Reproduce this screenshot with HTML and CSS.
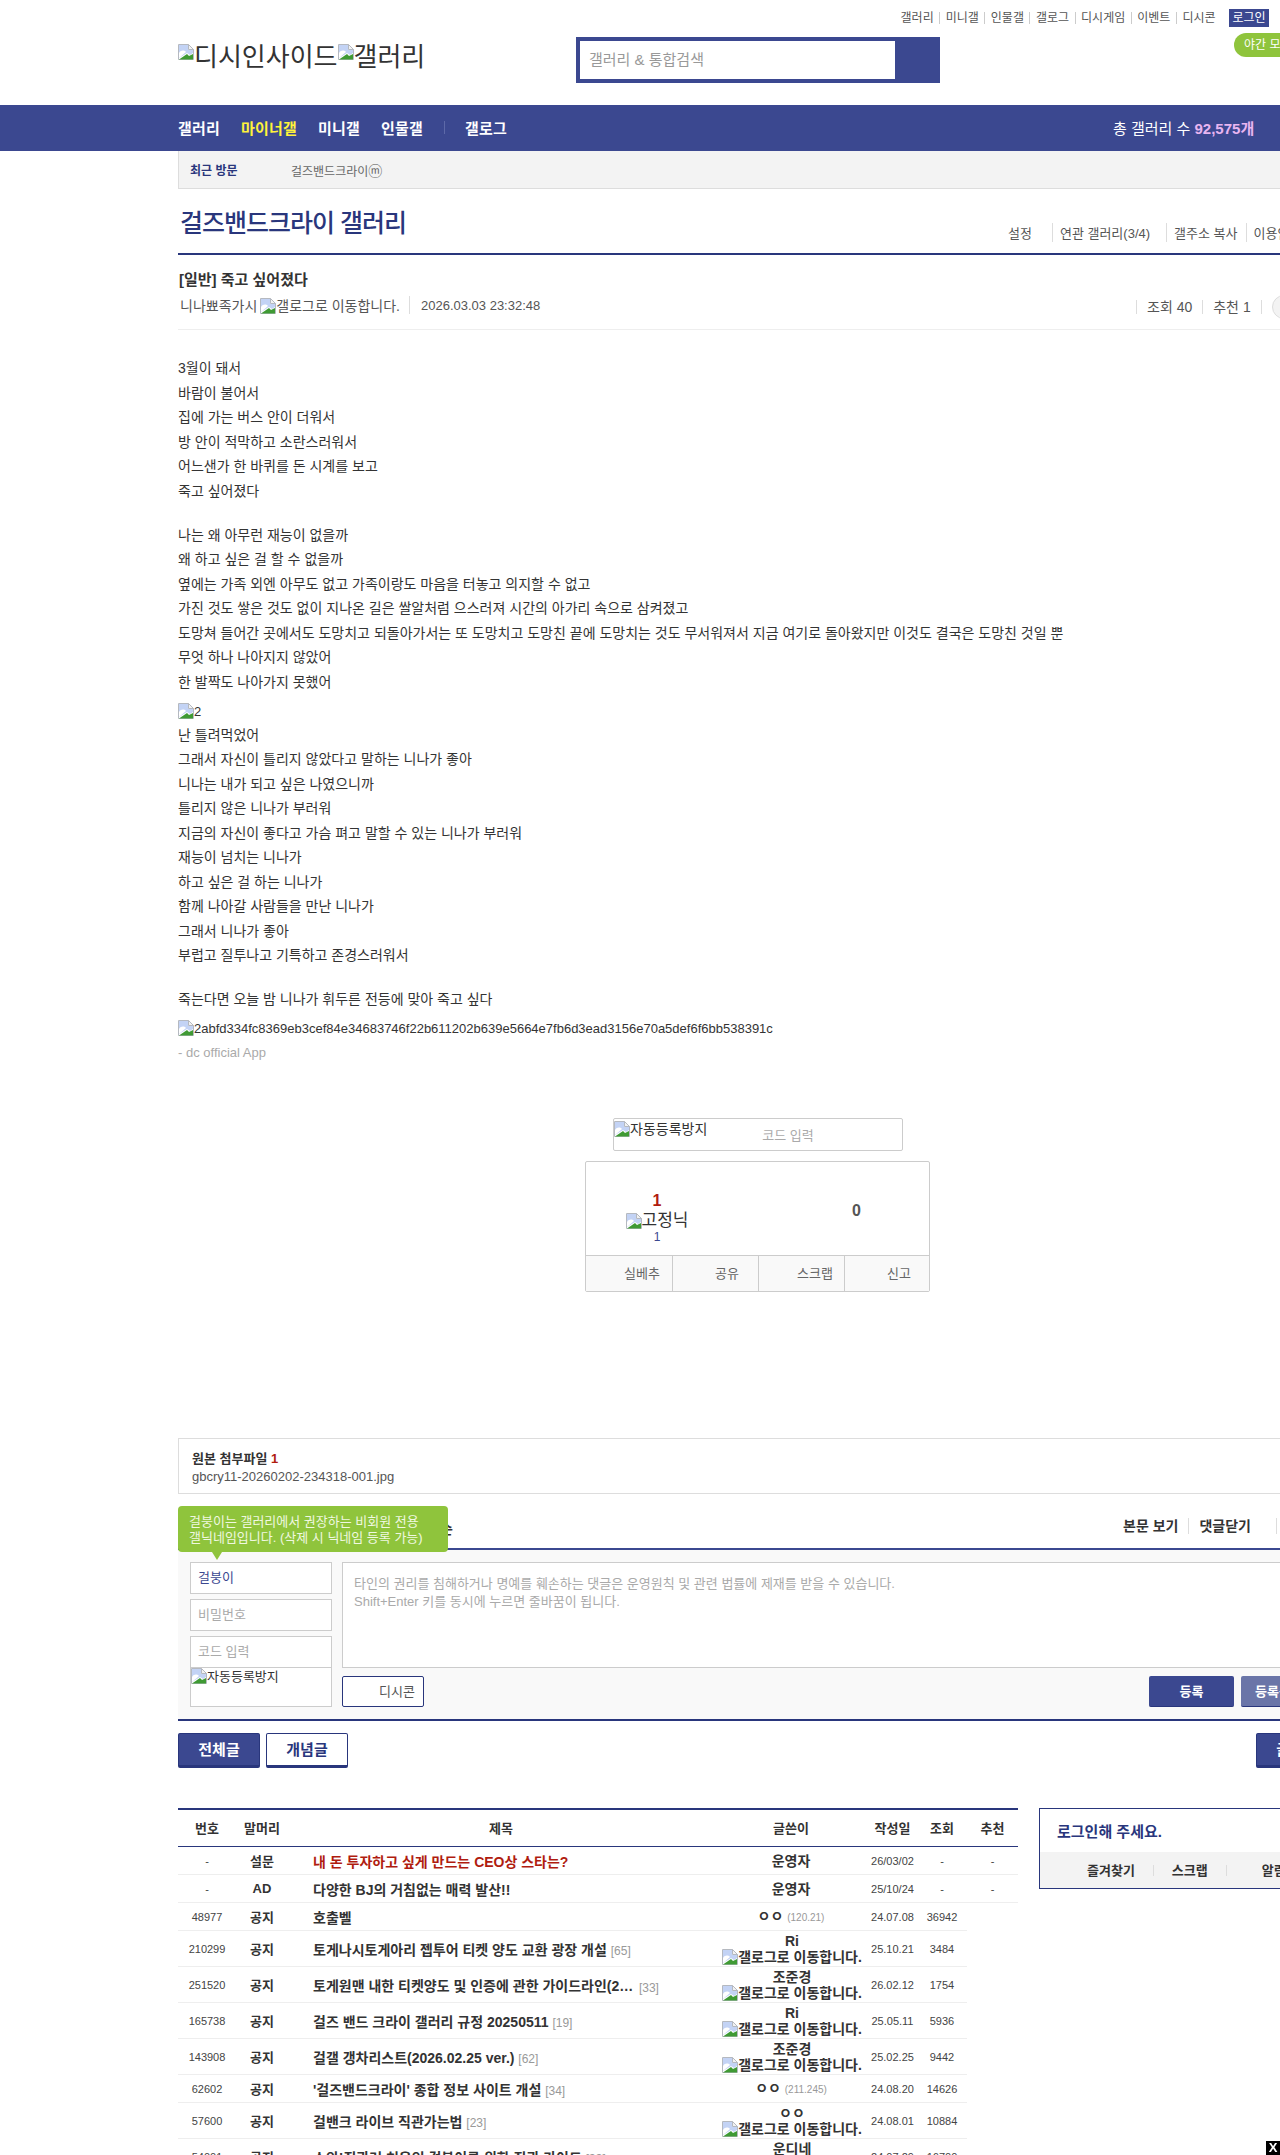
FILE: index.html
```html
<!DOCTYPE html>
<html lang="ko">
<head>
  <meta charset="UTF-8" />
  <title>걸즈밴드크라이 갤러리</title>
  <link rel="stylesheet" href="styles.css">
</head>
<body>
  <svg class="sprite" width="0" height="0">
    <symbol id="broken" viewBox="0 0 16 16">
      <path d="M.5.5h10l5 5v10H.5z" fill="#fff" stroke="#b5b9c0"/>
      <path d="M1 1h9.300v5H15v3l-3 2-3-2-8 5z" fill="#c3d3f5"/>
      <path d="M1 9c2-3 5-3 7-1l-7 6z" fill="#fff"/>
      <path d="M1 15.500 9 10l2 2 4-2v5.500z" fill="#3f9a34"/>
      <path d="M10.500 .5v5h5z" fill="#f2f2f2" stroke="#b5b9c0"/>
    </symbol>
  </svg>

  <div class="wrap">
    <div class="top-links">
      <a>갤러리</a><a>미니갤</a><a>인물갤</a><a>갤로그</a><a>디시게임</a><a>이벤트</a><a>디시콘</a>
      <span class="login-btn">로그인</span>
    </div>
    <div class="head">
      <div class="logo"><svg class="bi"><use href="#broken"/></svg>디시인사이드<svg class="bi"><use href="#broken"/></svg>갤러리</div>
      <div class="search">
        <div class="search-input">갤러리 &amp; 통합검색</div>
      </div>
      <div class="dark-mode">야간 모드</div>
    </div>
  </div>

  <div class="nav">
    <div class="wrap nav-in">
      <a>갤러리</a><a class="on">마이너갤</a><a>미니갤</a><a>인물갤</a><i></i><a>갤로그</a>
      <span class="nav-count">총 갤러리 수 <b>92,575개</b></span>
    </div>
  </div>

  <div class="wrap">
    <div class="recent">
      <b>최근 방문</b>
      <span>걸즈밴드크라이<em>ⓜ</em></span>
    </div>

    <div class="gall-head">
      <h2>걸즈밴드크라이 갤러리</h2>
      <div class="gall-links">
        <a>설정</a><a>연관 갤러리(3/4)</a><a>갤주소 복사</a><a>이용안내</a>
      </div>
    </div>

    <div class="post-head">
      <h3>[일반] 죽고 싶어졌다</h3>
      <div class="post-meta">
        <span class="writer">니나뾰족가시<svg class="bi small"><use href="#broken"/></svg>갤로그로 이동합니다.</span>
        <span class="date">2026.03.03 23:32:48</span>
        <span class="stats"><span>조회 40</span><span>추천 1</span><span class="cmt-circle"></span></span>
      </div>
    </div>

    <div class="post-body">
      <div class="para">
        <p>3월이 돼서</p>
        <p>바람이 불어서</p>
        <p>집에 가는 버스 안이 더워서</p>
        <p>방 안이 적막하고 소란스러워서</p>
        <p>어느샌가 한 바퀴를 돈 시계를 보고</p>
        <p>죽고 싶어졌다</p>
      </div>
      <div class="para">
        <p>나는 왜 아무런 재능이 없을까</p>
        <p>왜 하고 싶은 걸 할 수 없을까</p>
        <p>옆에는 가족 외엔 아무도 없고 가족이랑도 마음을 터놓고 의지할 수 없고</p>
        <p>가진 것도 쌓은 것도 없이 지나온 길은 쌀알처럼 으스러져 시간의 아가리 속으로 삼켜졌고</p>
        <p>도망쳐 들어간 곳에서도 도망치고 되돌아가서는 또 도망치고 도망친 끝에 도망치는 것도 무서워져서 지금 여기로 돌아왔지만 이것도 결국은 도망친 것일 뿐</p>
        <p>무엇 하나 나아지지 않았어</p>
        <p>한 발짝도 나아가지 못했어</p>
      </div>
      <p class="img-line"><svg class="bi small"><use href="#broken"/></svg>2</p>
      <div class="para">
        <p>난 틀려먹었어</p>
        <p>그래서 자신이 틀리지 않았다고 말하는 니나가 좋아</p>
        <p>니나는 내가 되고 싶은 나였으니까</p>
        <p>틀리지 않은 니나가 부러워</p>
        <p>지금의 자신이 좋다고 가슴 펴고 말할 수 있는 니나가 부러워</p>
        <p>재능이 넘치는 니나가</p>
        <p>하고 싶은 걸 하는 니나가</p>
        <p>함께 나아갈 사람들을 만난 니나가</p>
        <p>그래서 니나가 좋아</p>
        <p>부럽고 질투나고 기특하고 존경스러워서</p>
      </div>
      <div class="para end">
        <p>죽는다면 오늘 밤 니나가 휘두른 전등에 맞아 죽고 싶다</p>
      </div>
      <p class="hash"><svg class="bi small"><use href="#broken"/></svg>2abfd334fc8369eb3cef84e34683746f22b611202b639e5664e7fb6d3ead3156e70a5def6f6bb538391c</p>
      <p class="app-sign">- dc official App</p>
    </div>

    <div class="rec-code">
      <span class="rec-img"><svg class="bi small"><use href="#broken"/></svg>자동등록방지</span>
      <span class="rec-ph">코드 입력</span>
    </div>
    <div class="rec-box">
      <div class="rec-top">
        <div class="rec-up">
          <strong>1</strong>
          <span class="gonick"><svg class="bi small"><use href="#broken"/></svg>고정닉</span>
          <small>1</small>
        </div>
        <div class="rec-down">0</div>
      </div>
      <div class="rec-btns">
        <span>실베추</span><span>공유</span><span>스크랩</span><span>신고</span>
      </div>
    </div>

    <div class="attach">
      <b>원본 첨부파일 <em>1</em></b>
      <p>gbcry11-20260202-234318-001.jpg</p>
    </div>

    <div class="cmt-head">
      <span class="cmt-sort">전체 리플 0개 등록순</span>
      <div class="cmt-links"><a>본문 보기</a><a>댓글닫기</a><a>새로고침</a></div>
      <div class="tip">걸붕이는 갤러리에서 권장하는 비회원 전용<br>갤닉네임입니다. (삭제 시 닉네임 등록 가능)</div>
    </div>

    <div class="cmt-form">
      <div class="cmt-user">
        <div class="field navy">걸붕이</div>
        <div class="field">비밀번호</div>
        <div class="field last">코드 입력</div>
        <div class="code-img"><svg class="bi small"><use href="#broken"/></svg>자동등록방지</div>
      </div>
      <div class="cmt-main">
        <div class="textarea">타인의 권리를 침해하거나 명예를 훼손하는 댓글은 운영원칙 및 관련 법률에 제재를 받을 수 있습니다.<br>Shift+Enter 키를 동시에 누르면 줄바꿈이 됩니다.</div>
        <div class="cmt-btns">
          <span class="dccon">디시콘</span>
          <span class="btn-reg">등록</span>
          <span class="btn-reg alt">등록+추천</span>
        </div>
      </div>
    </div>

    <div class="tabs">
      <a class="tab on">전체글</a><a class="tab">개념글</a>
      <a class="tab on write">글쓰기</a>
    </div>

    <div class="list-area">
      <table class="list">
        <colgroup>
          <col class="c-no"><col class="c-head"><col class="c-title"><col class="c-user"><col class="c-date"><col class="c-view"><col class="c-rec">
        </colgroup>
        <thead>
          <tr><th>번호</th><th>말머리</th><th>제목</th><th>글쓴이</th><th>작성일</th><th>조회</th><th>추천</th></tr>
        </thead>
        <tbody>
          <tr class="r28"><td>-</td><td class="hd">설문</td><td class="tt red">내 돈 투자하고 싶게 만드는 CEO상 스타는?</td><td class="us">운영자</td><td>26/03/02</td><td>-</td><td>-</td></tr>
          <tr class="r28"><td>-</td><td class="hd">AD</td><td class="tt">다양한 BJ의 거침없는 매력 발산!!</td><td class="us">운영자</td><td>25/10/24</td><td>-</td><td>-</td></tr>
          <tr class="r28"><td>48977</td><td class="hd">공지</td><td class="tt">호출벨</td><td class="us">ㅇㅇ <span class="ip">(120.21)</span></td><td>24.07.08</td><td>36942</td></tr>
          <tr><td>210299</td><td class="hd">공지</td><td class="tt">토게나시토게아리 젭투어 티켓 양도 교환 광장 개설 <span class="rp">[65]</span></td><td class="us two">Ri<br><span class="gl"><svg class="bi small"><use href="#broken"/></svg>갤로그로 이동합니다.</span></td><td>25.10.21</td><td>3484</td></tr>
          <tr><td>251520</td><td class="hd">공지</td><td class="tt"><span class="cut">토게원맨 내한 티켓양도 및 인증에 관한 가이드라인(2026)</span> <span class="rp">[33]</span></td><td class="us two">조준경<br><span class="gl"><svg class="bi small"><use href="#broken"/></svg>갤로그로 이동합니다.</span></td><td>26.02.12</td><td>1754</td></tr>
          <tr><td>165738</td><td class="hd">공지</td><td class="tt">걸즈 밴드 크라이 갤러리 규정 20250511 <span class="rp">[19]</span></td><td class="us two">Ri<br><span class="gl"><svg class="bi small"><use href="#broken"/></svg>갤로그로 이동합니다.</span></td><td>25.05.11</td><td>5936</td></tr>
          <tr><td>143908</td><td class="hd">공지</td><td class="tt">걸갤 갱차리스트(2026.02.25 ver.) <span class="rp">[62]</span></td><td class="us two">조준경<br><span class="gl"><svg class="bi small"><use href="#broken"/></svg>갤로그로 이동합니다.</span></td><td>25.02.25</td><td>9442</td></tr>
          <tr class="r28"><td>62602</td><td class="hd">공지</td><td class="tt">'걸즈밴드크라이' 종합 정보 사이트 개설 <span class="rp">[34]</span></td><td class="us">ㅇㅇ <span class="ip">(211.245)</span></td><td>24.08.20</td><td>14626</td></tr>
          <tr><td>57600</td><td class="hd">공지</td><td class="tt">걸밴크 라이브 직관가는법 <span class="rp">[23]</span></td><td class="us two">ㅇㅇ<br><span class="gl"><svg class="bi small"><use href="#broken"/></svg>갤로그로 이동합니다.</span></td><td>24.08.01</td><td>10884</td></tr>
          <tr><td>54001</td><td class="hd">공지</td><td class="tt">스와!직관러 처음인 걸붕이를 위한 직관 가이드 <span class="rp">[33]</span></td><td class="us two">운디네<br><span class="gl"><svg class="bi small"><use href="#broken"/></svg>갤로그로 이동합니다.</span></td><td>24.07.29</td><td>16700</td></tr>
        </tbody>
      </table>
      <div class="login-box">
        <div class="login-msg">로그인해 주세요.</div>
        <div class="login-links"><a>즐겨찾기</a><a>스크랩</a><a>알림</a></div>
      </div>
    </div>
  </div>

  <span class="close-x">X</span>
</body>
</html>
```

FILE: styles.css
```css
* {
  box-sizing: border-box;
}
html, body {
  margin: 0;
  height: 2155px;
  overflow: hidden;
}
body {
  font-family: "Liberation Sans", "Noto Sans CJK KR", sans-serif;
  font-size: 12px;
  color: #333;
  background: #fff;
}
p, h2, h3 {
  margin: 0;
}
em {
  font-style: normal;
}
.sprite {
  display: block;
}
.bi {
  width: 16px;
  height: 16px;
  vertical-align: 6px;
}
.bi.small {
  vertical-align: -3px;
}
.wrap {
  width: 1160px;
  margin-left: 178px;
}

/* header */
.top-links {
  display: flex;
  justify-content: flex-end;
  align-items: center;
  height: 27px;
  padding: 9px 69px 0 0;
  font-size: 12px;
  color: #555;
}
.top-links a {
  padding: 0 5.5px;
  border-left: 1px solid #ccc;
  line-height: 12px;
}
.top-links a:first-child {
  border-left: 0;
}
.login-btn {
  width: 40px;
  height: 18px;
  margin-left: 8px;
  line-height: 18px;
  text-align: center;
  color: #fff;
  background: #3b4890;
}
.head {
  position: relative;
  display: flex;
  height: 78px;
}
.logo {
  width: 398px;
  padding-top: 13px;
  font-size: 26px;
  line-height: 34px;
  white-space: nowrap;
}
.search {
  width: 364px;
  height: 46px;
  margin-top: 10px;
  padding: 4px 45px 4px 4px;
  background: #3b4890;
}
.search-input {
  height: 38px;
  padding-left: 9px;
  font-size: 15px;
  line-height: 38px;
  color: #999;
  background: #fff;
}
.dark-mode {
  position: absolute;
  left: 1056px;
  top: 6px;
  width: 104px;
  height: 24px;
  padding-left: 10px;
  line-height: 24px;
  color: #fff;
  background: #8fc43c;
  border-radius: 12px;
}

/* nav */
.nav {
  height: 46px;
  background: #3b4890;
}
.nav-in {
  display: flex;
  align-items: center;
  height: 46px;
  padding-bottom: 1px;
  font-size: 15px;
  font-weight: bold;
  letter-spacing: .2px;
  color: #fff;
}
.nav-in a {
  margin-right: 21px;
}
.nav-in a.on {
  color: #fff33b;
}
.nav-in i {
  width: 1px;
  height: 13px;
  margin-right: 20px;
  background: #5d69a8;
}
.nav-count {
  position: absolute;
  left: 1113px;
  font-size: 15px;
  font-weight: normal;
  letter-spacing: 0;
}
.nav-count b {
  color: #e8b5f0;
}

/* recent */
.recent {
  display: flex;
  align-items: center;
  height: 38px;
  padding-left: 11px;
  background: #f3f3f3;
  border-left: 1px solid #ddd;
  border-bottom: 1px solid #ddd;
  color: #666;
}
.recent b {
  width: 101px;
  color: #29367c;
}
.recent em {
  font-size: 14px;
}

/* gallery title */
.gall-head {
  display: flex;
  justify-content: space-between;
  height: 66px;
  border-bottom: 2px solid #29367c;
}
.gall-head h2 {
  padding: 16px 0 0 2px;
  font-size: 25px;
  line-height: 36px;
  font-weight: 500;
  letter-spacing: -1px;
  color: #29367c;
}
.gall-links {
  display: flex;
  position: absolute;
  left: 1008px;
  top: 223px;
  font-size: 13px;
  color: #555;
  white-space: nowrap;
}
.gall-links a {
  padding-right: 20px;
}
.gall-links a + a {
  padding-left: 7px;
  border-left: 1px solid #ddd;
}
.gall-links a:nth-child(2) {
  padding-right: 16px;
}
.gall-links a:nth-child(3) {
  padding-right: 8px;
}

/* post head */
.post-head {
  height: 75px;
  border-bottom: 1px solid #eee;
  padding-left: 1px;
}
.post-head h3 {
  padding-top: 15px;
  font-size: 15px;
  line-height: 20px;
}
.post-meta {
  position: relative;
  display: flex;
  margin-top: 6px;
  line-height: 20px;
  font-size: 14px;
  color: #555;
}
.writer {
  height: 18px;
  padding: 0 9px 0 1px;
  border-right: 1px solid #ddd;
}
.writer .bi {
  margin-left: 3px;
}
.date {
  padding-left: 11px;
  font-size: 13px;
}
.stats {
  position: absolute;
  left: 957px;
  top: -1px;
  display: flex;
  align-items: center;
  white-space: nowrap;
}
.stats span {
  padding: 0 10px;
  border-left: 1px solid #ddd;
  line-height: 14px;
}
.stats span:nth-child(2) {
  border-right: 1px solid #ddd;
}
.stats .cmt-circle {
  width: 28px;
  height: 24px;
  margin-left: 10px;
  padding: 0;
  border: 1px solid #ddd;
  border-radius: 12px;
  background: #f3f3f3;
}

/* post body */
.post-body {
  padding-top: 26px;
  font-size: 14px;
  line-height: 24.5px;
  color: #333;
  height: 788px;
}
.post-body .para {
  margin-bottom: 19.500px;
}
.post-body .para.end {
  margin-bottom: 5.500px;
}
.post-body .img-line {
  margin-top: -14px;
  font-size: 13px;
  line-height: 23px;
}
.post-body .hash {
  font-size: 13px;
}
.app-sign {
  margin-top: -1px;
  font-size: 13px;
  color: #aaa;
}

/* recommend */
.rec-code {
  display: flex;
  width: 290px;
  height: 33px;
  margin-left: 435px;
  border: 1px solid #ccc;
  border-radius: 2px;
  font-size: 14px;
}
.rec-img {
  line-height: 20px;
  white-space: nowrap;
}
.rec-ph {
  padding: 6px 0 0 55px;
  font-size: 13px;
  color: #aaa;
}
.rec-box {
  width: 345px;
  height: 131px;
  margin: 10px 0 0 407px;
  border: 1px solid #ccc;
  border-radius: 2px;
}
.rec-top {
  position: relative;
  height: 93px;
  font-weight: bold;
}
.rec-up {
  display: flex;
  flex-direction: column;
  align-items: center;
  width: 142px;
  padding-top: 28px;
}
.rec-up strong {
  font-size: 16px;
  line-height: 22px;
  color: #b01c0f;
}
.gonick {
  font-size: 17px;
  font-weight: normal;
  line-height: 18px;
  white-space: nowrap;
}
.rec-up small {
  font-size: 12px;
  font-weight: normal;
  line-height: 15px;
  color: #3b4890;
}
.rec-down {
  position: absolute;
  left: 266px;
  top: 40px;
  font-size: 16px;
  color: #555;
}
.rec-btns {
  display: grid;
  grid-template-columns: repeat(4, 86px);
  height: 36px;
  background: #f9f9f9;
  border-top: 1px solid #ccc;
  font-size: 13px;
  line-height: 36px;
  color: #666;
}
.rec-btns span {
  padding-right: 11px;
  text-align: right;
  border-left: 1px solid #ccc;
}
.rec-btns span:nth-child(even) {
  padding-right: 19px;
}
.rec-btns span:first-child {
  padding-right: 12px;
  border-left: 0;
}

/* attachment */
.attach {
  height: 56px;
  margin-top: 146px;
  padding: 11px 13px;
  border: 1px solid #ddd;
  font-size: 13px;
  line-height: 18px;
}
.attach b {
  display: block;
  font-size: 13px;
  color: #333;
}
.attach b em {
  color: #b01c0f;
}
.attach p {
  font-size: 13px;
  color: #555;
}

/* comments */
.cmt-head {
  position: relative;
  height: 56px;
  border-bottom: 2px solid #3b4890;
}
.cmt-sort {
  position: absolute;
  left: 0;
  top: 24px;
  width: 275px;
  text-align: right;
  font-size: 14px;
  font-weight: bold;
  white-space: nowrap;
}
.cmt-links {
  position: absolute;
  left: 945px;
  top: 24px;
  display: flex;
  font-size: 14px;
  font-weight: bold;
  white-space: nowrap;
}
.cmt-links a {
  padding: 0 25px 0 10px;
  border-left: 1px solid #ddd;
  line-height: 16px;
}
.cmt-links a:first-child {
  padding: 0 10px 0 0;
  border-left: 0;
}
.tip {
  position: absolute;
  left: 0;
  top: 12px;
  width: 270px;
  height: 46px;
  padding: 8px 11px;
  border-radius: 4px;
  font-size: 13px;
  line-height: 16px;
  white-space: nowrap;
  color: #f0f8e0;
  background: #8fc43c;
}
.tip::after {
  content: "";
  position: absolute;
  left: 34px;
  top: 46px;
  border: 5px solid transparent;
  border-top: 8px solid #8fc43c;
  border-bottom: 0;
}
.cmt-form {
  display: flex;
  height: 171px;
  padding: 12px 0 0 12px;
  background: #f9f9f9;
  border-bottom: 2px solid #29367c;
}
.cmt-user {
  width: 142px;
}
.field {
  height: 32px;
  margin-bottom: 5px;
  padding-left: 7px;
  font-size: 13px;
  line-height: 30px;
  color: #aaa;
  background: #fff;
  border: 1px solid #ccc;
}
.field.navy {
  color: #3b4890;
}
.field.last {
  margin-bottom: 0;
}
.code-img {
  height: 39px;
  font-size: 13px;
  line-height: 16px;
  color: #333;
  background: #fff;
  border: 1px solid #ccc;
  border-top: 0;
  white-space: nowrap;
}
.cmt-main {
  width: 994px;
  margin-left: 10px;
}
.textarea {
  height: 106px;
  padding: 12px 11px;
  font-size: 13px;
  line-height: 18px;
  color: #aaa;
  background: #fff;
  border: 1px solid #ccc;
}
.cmt-btns {
  display: flex;
  margin-top: 8px;
}
.dccon {
  width: 82px;
  height: 31px;
  padding-right: 8px;
  font-size: 13px;
  line-height: 29px;
  text-align: right;
  background: #fff;
  border: 1px solid #29367c;
  border-radius: 2px;
  color: #555;
}
.btn-reg {
  width: 85px;
  height: 31px;
  margin-left: 725px;
  font-size: 13px;
  line-height: 31px;
  text-align: center;
  font-weight: bold;
  color: #fff;
  background: #3b4890;
  border-bottom: 1px solid #29367c;
  border-radius: 2px;
}
.btn-reg.alt {
  width: 90px;
  margin-left: 7px;
  padding-left: 14px;
  text-align: left;
  background: #6a75a8;
  white-space: nowrap;
}

/* tabs */
.tabs {
  position: relative;
  display: flex;
  gap: 6px;
  height: 87px;
  padding-top: 12px;
}
.tab {
  width: 82px;
  height: 35px;
  line-height: 32px;
  text-align: center;
  font-size: 15px;
  font-weight: bold;
  color: #29367c;
  background: #fff;
  border: 1px solid #29367c;
  border-bottom-width: 3px;
  border-radius: 2px;
}
.tab.on {
  color: #fff;
  background: #3b4890;
}
.tab.write {
  position: absolute;
  left: 1078px;
}

/* list */
.list-area {
  display: flex;
  align-items: flex-start;
}
.list {
  width: 840px;
  table-layout: fixed;
  border-collapse: collapse;
  border-top: 2px solid #29367c;
  color: #444;
}
.c-no { width: 58px; }
.c-head { width: 52px; }
.c-title { width: 426px; }
.c-user { width: 154px; }
.c-date { width: 49px; }
.c-view { width: 50px; }
.c-rec { width: 51px; }
.list th {
  height: 37px;
  font-size: 13px;
  font-weight: bold;
  color: #333;
  border-bottom: 1px solid #29367c;
}
.list td {
  height: 36px;
  padding: 1px 0 0;
  text-align: center;
  font-size: 11px;
  white-space: nowrap;
  border-bottom: 1px solid #eee;
}
.list .r28 td {
  height: 28px;
}
.list td.hd {
  font-size: 13px;
  font-weight: bold;
  color: #333;
}
.list td.tt {
  padding-left: 25px;
  text-align: left;
  font-size: 14px;
  font-weight: bold;
  color: #333;
}
.list td.red {
  color: #b01c0f;
}
.rp {
  font-size: 12px;
  font-weight: normal;
  color: #999;
}
.cut {
  display: inline-block;
  max-width: 322px;
  overflow: hidden;
  text-overflow: ellipsis;
  vertical-align: bottom;
}
.list td.us {
  font-size: 14px;
  font-weight: bold;
  color: #333;
  line-height: 16px;
}
.list td.us.two {
  padding: 2px 0 0 2px;
}
.ip {
  font-size: 10px;
  font-weight: normal;
  color: #999;
}
.login-box {
  width: 300px;
  height: 81px;
  margin-left: 21px;
  border: 1px solid #29367c;
}
.login-msg {
  height: 43px;
  padding: 1px 0 0 17px;
  line-height: 44px;
  font-size: 15px;
  font-weight: bold;
  color: #29367c;
}
.login-links {
  display: flex;
  align-items: center;
  height: 36px;
  padding-left: 47px;
  font-size: 13px;
  line-height: 11px;
  font-weight: bold;
  background: #f3f3f3;
}
.login-links a {
  padding: 0 18px;
  border-left: 1px solid #ddd;
}
.login-links a:first-child {
  padding-left: 0;
  border-left: 0;
}
.login-links a:last-child {
  padding-left: 35px;
}
.close-x {
  position: fixed;
  right: 0;
  bottom: 0;
  width: 14px;
  height: 14px;
  line-height: 14px;
  text-align: center;
  font-size: 13px;
  font-weight: bold;
  color: #fff;
  background: #000;
}
```
